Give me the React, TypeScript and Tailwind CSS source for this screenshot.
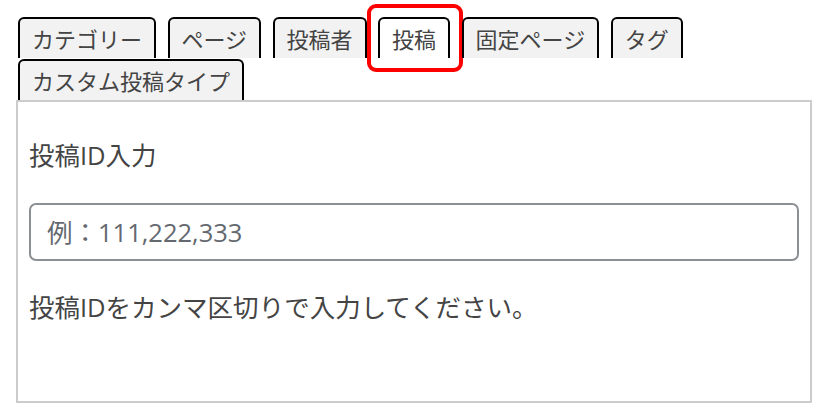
const tabs = ['カテゴリー', 'ページ', '投稿者', '投稿', '固定ページ', 'タグ', 'カスタム投稿タイプ'];
const activeTab = '投稿';

export default function App() {
  return (
    <div className="w-[834px] h-[420px] bg-white font-['Open_Sans','Noto_Sans_CJK_JP',sans-serif] text-[#444]">
      <div className="pl-[18px] pt-[17px] w-[812px]">
        {/* タブ */}
        <div className="flex flex-wrap gap-x-[11.5px] gap-y-[1px] w-[794px]">
          {tabs.map((tab) => {
            const active = tab === activeTab;
            return (
              <div
                key={tab}
                className={`relative h-[41px] px-[12px] pt-[1px] flex items-center border-2 border-b-0 border-black rounded-t-[6px] text-[22px] leading-none ${
                  active ? 'bg-white' : 'bg-[#f2f2f2]'
                }`}
              >
                {tab}
                {active && (
                  <span className="absolute -left-[13px] -right-[15px] -top-[15px] h-[68px] border-[4px] border-[#ff0000] rounded-[9px]" />
                )}
              </div>
            );
          })}
        </div>
      </div>

      {/* 入力パネル */}
      <div className="ml-[16px] w-[796px] h-[303px] border-2 border-[#cccccc] px-[11px] pt-[35px]">
        <p className="text-[25.5px] leading-[37px] text-[#444]">投稿ID入力</p>
        <input
          type="text"
          placeholder="例：111,222,333"
          className="mt-[29px] w-full h-[58px] px-[16px] border-2 border-[#8c8f94] rounded-[7px] text-[25.5px] text-[#444] placeholder:text-[#646970] outline-none"
        />
        <p className="mt-[28px] text-[25.5px] leading-[37px] text-[#444]">
          投稿IDをカンマ区切りで入力してください。
        </p>
      </div>
    </div>
  );
}
